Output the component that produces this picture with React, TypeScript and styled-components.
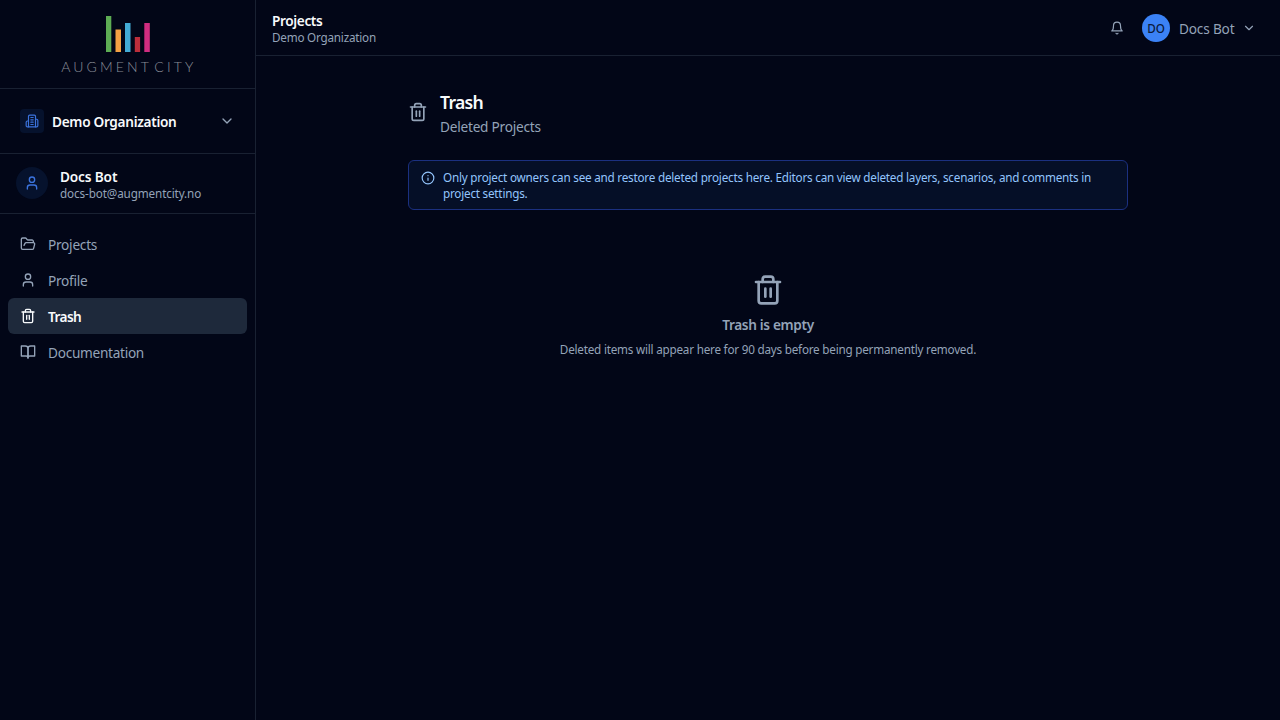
import React from 'react';
import styled, { createGlobalStyle } from 'styled-components';

const GlobalStyle = createGlobalStyle`
  *, *::before, *::after { box-sizing: border-box; }
  body {
    margin: 0;
    background: #020617;
    color: #f8fafc;
    font-family: 'Noto Sans', 'Open Sans', sans-serif;
  }
`;

const line = '#192132';
const muted = '#94a3b8';

const Shell = styled.div`
  display: flex;
  height: 100vh;
  overflow: hidden;
`;

const Sidebar = styled.aside`
  width: 256px;
  flex: none;
  border-right: 1px solid ${line};
`;

const Brand = styled.div`
  height: 89px;
  padding-top: 16px;
  display: flex;
  flex-direction: column;
  align-items: center;
  border-bottom: 1px solid ${line};
`;

const BrandName = styled.div`
  margin-top: 7px;
  font-family: Lato, sans-serif;
  font-weight: 300;
  font-size: 14px;
  line-height: 16px;
  letter-spacing: 3.1px;
  word-spacing: -4px;
  margin-right: -2.6px;
  white-space: nowrap;
  color: #8b8e98;
`;

const Organization = styled.div`
  height: 65px;
  padding: 0 20px;
  display: flex;
  align-items: center;
  border-bottom: 1px solid ${line};
  color: ${muted};
`;

const IconBox = styled.span<{ $size: number; $radius: string }>`
  width: ${p => p.$size}px;
  height: ${p => p.$size}px;
  border-radius: ${p => p.$radius};
  flex: none;
  display: grid;
  place-items: center;
  background: #06122d;
  color: #3b73dd;
`;

const Text = styled.div<{ $spacing?: number; $strong?: boolean }>`
  font-size: 13.65px;
  line-height: 20px;
  font-weight: ${p => (p.$strong ? 600 : 400)};
  letter-spacing: ${p => p.$spacing ?? -0.2}px;
  white-space: nowrap;
`;

const SmallText = styled(Text)`
  margin: -1px 0 1px;
  font-size: 11.7px;
  line-height: 16px;
  color: ${muted};
`;

const NameText = styled(Text)`
  height: 20px;
  padding-top: 1px;
`;

const OrganizationName = styled(Text)`
  flex: 1;
  margin-left: 8px;
  padding-top: 1px;
  color: #f8fafc;
`;

const Account = styled.div`
  height: 60px;
  padding: 0 16px;
  display: flex;
  align-items: center;
  gap: 12px;
  border-bottom: 1px solid ${line};

  ${IconBox} { margin-bottom: 1px; }
`;

const Nav = styled.nav`
  padding: 12px 8px;
`;

const NavItem = styled.a<{ $active?: boolean }>`
  height: 36px;
  padding: 0 12px;
  display: flex;
  align-items: center;
  gap: 12px;
  border-radius: 6px;
  background: ${p => (p.$active ? '#1e293b' : 'transparent')};
  color: ${p => (p.$active ? '#f8fafc' : muted)};

  svg { margin-bottom: 1px; }
`;

const NavLabel = styled(Text)`
  padding-top: 2px;
`;

const Main = styled.main`
  flex: 1;
  min-width: 0;
`;

const TopBar = styled.header`
  height: 56px;
  padding: 0 24px 0 16px;
  display: flex;
  align-items: center;
  justify-content: space-between;
  border-bottom: 1px solid ${line};
`;

const UserMenu = styled.div`
  display: flex;
  align-items: center;
  color: ${muted};
`;

const Avatar = styled.span`
  width: 28px;
  height: 28px;
  margin: 0 9px 0 18px;
  border-radius: 50%;
  display: grid;
  place-items: center;
  background: #3b82f6;
  color: #0b1a3c;
  font-size: 11.7px;
  font-weight: 500;
  line-height: 16px;
  padding-top: 1px;
`;

const UserName = styled(Text)`
  width: 63px;
  padding-top: 2px;
`;

const Content = styled.div`
  width: 720px;
  margin: 32px auto 0;
`;

const Heading = styled.div`
  display: flex;
  align-items: center;
  gap: 12px;
  margin-bottom: 24px;
  color: ${muted};
`;

const Title = styled.h1`
  margin: 0;
  font-size: 17.6px;
  line-height: 28px;
  font-weight: 600;
  letter-spacing: -0.7px;
  color: #f8fafc;
`;

const Subtitle = styled(Text)`
  height: 20px;
  padding-top: 1px;
`;

const Notice = styled.div`
  display: flex;
  gap: 8px;
  padding: 8px 12px;
  border: 1px solid #1b3080;
  border-radius: 6px;
  background: #050f27;
  color: #93c5fd;

  svg { flex: none; margin-top: 2px; }
`;

const NoticeText = styled.p`
  margin: 0;
  font-size: 11.7px;
  line-height: 16px;
  letter-spacing: -0.215px;
`;

const Empty = styled.div`
  padding-top: 64px;
  display: flex;
  flex-direction: column;
  align-items: center;
  color: ${muted};
`;

const EmptyTitle = styled(Text)`
  margin: 9px 0 7px;
`;

type IconProps = { size: number; paths: string[]; stroke?: number; children?: React.ReactNode };

const Icon = ({ size, paths, stroke = 2, children }: IconProps) => (
  <svg width={size} height={size} viewBox="0 0 24 24" fill="none" stroke="currentColor"
    strokeWidth={stroke} strokeLinecap="round" strokeLinejoin="round">
    {paths.map(d => <path key={d} d={d} />)}
    {children}
  </svg>
);

const trash = ['M3 6h18', 'M19 6v14a2 2 0 0 1-2 2H7a2 2 0 0 1-2-2V6', 'M8 6V4a2 2 0 0 1 2-2h4a2 2 0 0 1 2 2v2', 'M10 11v6', 'M14 11v6'];
const folder = ['m6 14 1.5-2.9A2 2 0 0 1 9.24 10H20a2 2 0 0 1 1.94 2.5l-1.54 6a2 2 0 0 1-1.95 1.5H4a2 2 0 0 1-2-2V5a2 2 0 0 1 2-2h3.9a2 2 0 0 1 1.69.9l.81 1.2a2 2 0 0 0 1.67.9H18a2 2 0 0 1 2 2v2'];
const book = ['M2 3h6a4 4 0 0 1 4 4v14a3 3 0 0 0-3-3H2z', 'M22 3h-6a4 4 0 0 0-4 4v14a3 3 0 0 1 3-3h7z'];
const building = ['M6 22V4a2 2 0 0 1 2-2h8a2 2 0 0 1 2 2v18Z', 'M6 12H4a2 2 0 0 0-2 2v6a2 2 0 0 0 2 2h2', 'M18 9h2a2 2 0 0 1 2 2v9a2 2 0 0 1-2 2h-2', 'M10 6h4', 'M10 10h4', 'M10 14h4', 'M10 18h4'];
const bell = ['M6 8a6 6 0 0 1 12 0c0 7 3 9 3 9H3s3-2 3-9', 'M10.3 21a1.94 1.94 0 0 0 3.4 0'];
const chevron = ['m6 9 6 6 6-6'];

const UserIcon = () => (
  <Icon size={16} paths={['M19 21v-2a4 4 0 0 0-4-4H9a4 4 0 0 0-4 4v2']}>
    <circle cx="12" cy="7" r="4" />
  </Icon>
);

const Logo = () => (
  <svg width="46" height="36" viewBox="0 0 46 36">
    <rect x="1" y="0" width="5.3" height="36" fill="#5dac54" />
    <rect x="10.5" y="13.5" width="5.5" height="22.5" fill="#f2a043" />
    <rect x="20" y="7" width="5.5" height="29" fill="#43abd5" />
    <rect x="29.8" y="21" width="5.3" height="15" fill="#bc2e3b" />
    <rect x="39.3" y="7" width="5.5" height="29" fill="#d12d80" />
  </svg>
);

export default function App() {
  return (
    <Shell>
      <GlobalStyle />
      <Sidebar>
        <Brand>
          <Logo />
          <BrandName>AUGMENT CITY</BrandName>
        </Brand>
        <Organization>
          <IconBox $size={24} $radius="4px"><Icon size={14} paths={building} /></IconBox>
          <OrganizationName $strong $spacing={-0.31}>Demo Organization</OrganizationName>
          <Icon size={16} paths={chevron} />
        </Organization>
        <Account>
          <IconBox $size={32} $radius="50%"><UserIcon /></IconBox>
          <div>
            <NameText $strong $spacing={-0.15}>Docs Bot</NameText>
            <SmallText $spacing={-0.12}>docs-bot@augmentcity.no</SmallText>
          </div>
        </Account>
        <Nav>
          <NavItem><Icon size={16} paths={folder} /><NavLabel $spacing={-0.25}>Projects</NavLabel></NavItem>
          <NavItem><UserIcon /><NavLabel $spacing={-0.25}>Profile</NavLabel></NavItem>
          <NavItem $active><Icon size={16} paths={trash} /><NavLabel $strong $spacing={-0.6}>Trash</NavLabel></NavItem>
          <NavItem><Icon size={16} paths={book} /><NavLabel $spacing={-0.29}>Documentation</NavLabel></NavItem>
        </Nav>
      </Sidebar>
      <Main>
        <TopBar>
          <div>
            <NameText $strong $spacing={-0.38}>Projects</NameText>
            <SmallText $spacing={-0.21}>Demo Organization</SmallText>
          </div>
          <UserMenu>
            <Icon size={14} paths={bell} />
            <Avatar>DO</Avatar>
            <UserName $spacing={-0.18}>Docs Bot</UserName>
            <Icon size={14} paths={chevron} />
          </UserMenu>
        </TopBar>
        <Content>
          <Heading>
            <Icon size={20} paths={trash} />
            <div>
              <Title>Trash</Title>
              <Subtitle $spacing={-0.23}>Deleted Projects</Subtitle>
            </div>
          </Heading>
          <Notice>
            <Icon size={14} paths={['M12 16v-4', 'M12 8h.01']}><circle cx="12" cy="12" r="10" /></Icon>
            <NoticeText>
              Only project owners can see and restore deleted projects here. Editors can view deleted layers, scenarios, and comments in project settings.
            </NoticeText>
          </Notice>
          <Empty>
            <Icon size={32} paths={trash} />
            <EmptyTitle $strong $spacing={-0.34}>Trash is empty</EmptyTitle>
            <SmallText $spacing={-0.215}>Deleted items will appear here for 90 days before being permanently removed.</SmallText>
          </Empty>
        </Content>
      </Main>
    </Shell>
  );
}
